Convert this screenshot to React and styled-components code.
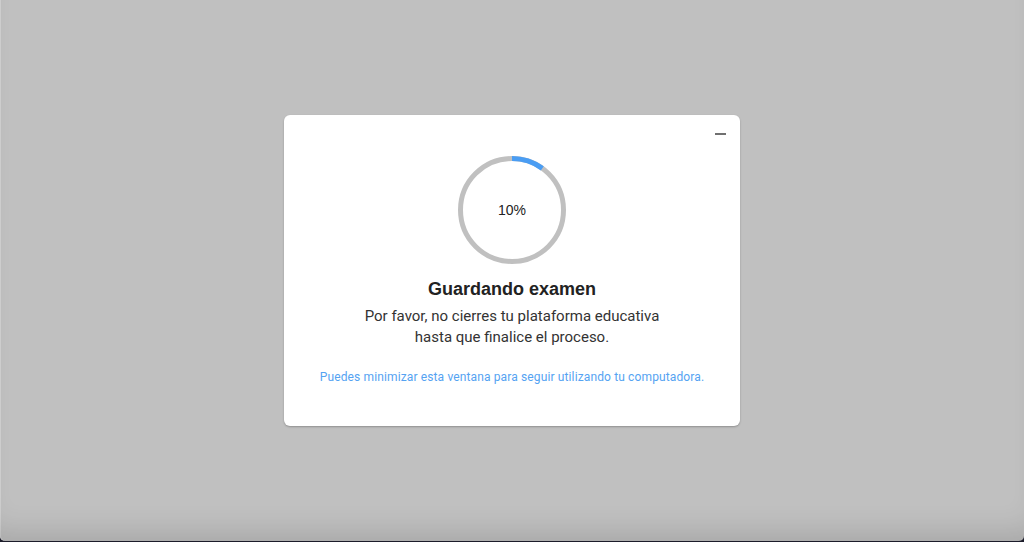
import React from 'react';
import styled, { createGlobalStyle } from 'styled-components';

const GlobalStyle = createGlobalStyle`
  html, body { margin: 0; padding: 0; }
  body { background: #1c1c2a; }
`;

const Screen = styled.div`
  width: 1024px;
  height: 541px;
  background: #c0c0c0;
  border-radius: 0 0 5px 5px;
  box-shadow: inset 0 -26px 30px -18px rgba(0, 0, 0, 0.14), inset 1px 0 0 #d0d0d0;
  display: flex;
  align-items: center;
  justify-content: center;
`;

const Modal = styled.div`
  position: relative;
  width: 456px;
  height: 311px;
  box-sizing: border-box;
  margin-top: -1px;
  background: #fff;
  border-radius: 6px;
  box-shadow: 0 1px 2px rgba(0, 0, 0, 0.25);
  display: flex;
  flex-direction: column;
  align-items: center;
  padding-top: 41px;
`;

const MinimizeButton = styled.button`
  position: absolute;
  top: 11px;
  right: 12px;
  width: 16px;
  height: 16px;
  border: 0;
  padding: 0;
  background: transparent;
  cursor: pointer;
  display: flex;
  align-items: center;
  justify-content: center;
  &::before {
    content: '';
    display: block;
    width: 11px;
    height: 2px;
    background: #707070;
  }
`;

const Ring = styled.div`
  position: relative;
  width: 108px;
  height: 108px;
  display: flex;
  align-items: center;
  justify-content: center;
`;

const RingSvg = styled.svg`
  position: absolute;
  inset: 0;
`;

const Percent = styled.span`
  font-family: "Liberation Sans", Arial, sans-serif;
  font-size: 14px;
  color: #222;
`;

const Title = styled.h2`
  margin: 14px 0 0;
  font-family: "Liberation Sans", Arial, sans-serif;
  font-weight: 700;
  font-size: 18px;
  line-height: 22px;
  color: #222;
`;

const Message = styled.p`
  margin: 6px 0 0;
  font-family: Roboto, "Noto Sans", sans-serif;
  font-size: 15px;
  line-height: 21px;
  color: #333;
  text-align: center;
`;

const Hint = styled.p`
  margin: 21px 0 0;
  font-family: Roboto, "Noto Sans", sans-serif;
  font-size: 12px;
  line-height: 16px;
  letter-spacing: 0.13px;
  color: #55a3f2;
  text-align: center;
`;

function ProgressRing({ value }) {
  const r = 51.5;
  const c = 2 * Math.PI * r;
  return (
    <Ring>
      <RingSvg width="108" height="108" viewBox="0 0 108 108">
        <circle cx="54" cy="54" r={r} fill="none" stroke="#c0c0c0" strokeWidth="5" />
        <circle
          cx="54"
          cy="54"
          r={r}
          fill="none"
          stroke="#4a9df3"
          strokeWidth="5"
          strokeDasharray={`${(c * value) / 100} ${c}`}
          transform="rotate(-90 54 54)"
        />
      </RingSvg>
      <Percent>{value}%</Percent>
    </Ring>
  );
}

export default function App() {
  return (
    <>
      <GlobalStyle />
      <Screen>
        <Modal>
          <MinimizeButton aria-label="Minimizar" />
          <ProgressRing value={10} />
          <Title>Guardando examen</Title>
          <Message>
            Por favor, no cierres tu plataforma educativa
            <br />
            hasta que finalice el proceso.
          </Message>
          <Hint>Puedes minimizar esta ventana para seguir utilizando tu computadora.</Hint>
        </Modal>
      </Screen>
    </>
  );
}
